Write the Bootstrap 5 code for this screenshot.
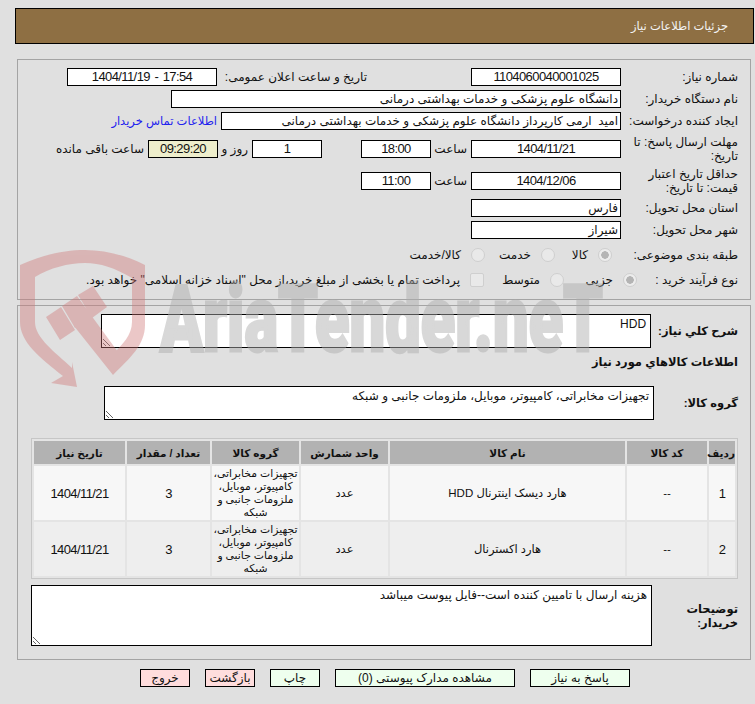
<!DOCTYPE html>
<html lang="fa" dir="rtl">
<head>
<meta charset="utf-8">
<title>جزئیات اطلاعات نیاز</title>
<link rel="stylesheet" href="https://cdn.jsdelivr.net/npm/bootstrap@5.3.0/dist/css/bootstrap.min.css">
<style>
html,body{height:100%}
body{background:#e0e0e0;color:#111;font-family:"Liberation Sans","DejaVu Sans","Noto Sans",sans-serif;font-size:12px;line-height:14px;position:relative;overflow:hidden}
.wm-layer{position:absolute;left:0;top:0;z-index:2;pointer-events:none;direction:ltr}
.wm-shield{fill:rgb(207,117,117);opacity:.4}
.wm-word{fill:#aeaeae;stroke:#aeaeae;stroke-width:3px;opacity:.48;font-family:Roboto,"Liberation Sans",sans-serif;font-weight:900;font-size:92px}
.pg{position:relative;z-index:1;padding-top:8px}
.top-bar{height:36px;margin:0 1px 0 15px;background:#8e6f43;border:1px solid #000;color:#f4f4f4;font-size:11.5px;padding-right:25px}
.pane{margin:0 4px 0 17px;border:1px solid #a4a4a4}
.pane-a{margin-top:15px;height:241px;padding:8px 12px 0 0}
.pane-b{margin-top:5px;height:355px;padding:8px 12px 0 0}
.frow{display:flex;align-items:center;height:18px;margin-bottom:4px;white-space:nowrap}
.frow.tall{height:30px;margin-bottom:2px}
.flab{flex:0 0 117px}
.tall .flab{white-space:normal;padding-left:8px}
.fv{height:18px;border:1px solid #000;background:#fff;line-height:16px;padding:0 2px;flex:none;overflow:hidden}
.ctr{text-align:center}
.num{font-size:13px;letter-spacing:-.6px;word-spacing:1.5px}
.w150{width:150px}.w450{width:450px}.w400{width:400px}.w70{width:70px}
.clock{background:#eeeecc}
.g-a{margin-right:4px}
.buyer-link{color:#2222ee;text-decoration:none;margin-right:4px;font-size:11.5px}
.opt{appearance:none;-webkit-appearance:none;width:14px;height:14px;border:1px solid #cfcfcf;border-radius:50%;background:#e9e9e9;margin:0;flex:none;opacity:1}
.opt.sq{border-radius:2px}
.opt.on{background:radial-gradient(circle,#b4b4b4 0 3.5px,#ececec 4px)}
.r8{height:18px;margin-top:7px;margin-bottom:7px}
.f126{flex-basis:126px}.f101{flex-basis:101px}
.lb-g{margin-right:10px}
.strong-lab{font-weight:700;font-size:11.5px;white-space:nowrap}
.ta{display:block;background:#fff;border:1px solid #000;border-radius:0;font:inherit;color:#111;padding:2px 4px;margin:0;outline:0;direction:rtl;flex:none}
.ta1{width:550px;height:34px;margin-right:7px}
.ta2{width:550px;height:34px;margin-right:20px}
.ta3{width:621px;height:61px;margin-right:20px}
.tb-wrap{margin:18px 0 0 13px}
.gridt{width:707px;border-collapse:separate;border-spacing:2px;background:#e4e4e4;border:1px solid #c6c6c6;table-layout:fixed;text-align:center}
.gridt th{background:#b2b2b2;height:23px;padding:0;font-weight:700;font-size:10.5px}
.gridt td{padding:0;height:54px;font-size:11.5px;line-height:13px}
.gridt td.num{font-size:13px}
.gridt td.grp{font-size:10.8px}
.gridt .o1 td{background:#f7f7f7}
.gridt .o2 td{background:#eeeeee}
.acts{display:flex;margin:9px 0 0 0;padding-right:125px;gap:15px}
.act{height:18px;border:1px solid #000;border-radius:0;font:inherit;line-height:16px;padding:0;color:#111;flex:none}
.act.ok{background:#eeffee}.act.no{background:#ffdddd}
.w100{width:100px}.w180{width:180px}.w50{width:50px}
</style>
</head>
<body>
<svg class="wm-layer" width="755" height="704" viewBox="0 0 755 704" aria-hidden="true">
  <g class="wm-shield">
    <path fill-rule="evenodd" d="M20 265C45 254 65 250 85 250C105 250 125 255 145 265L145 325C145 345 130 358 113 375L74 326L80 322L114 353C122 345 132 335 132 322L132 278C115 268 100 263 85 263C68 263 50 268 35 277L35 322C35 338 55 352 72 368L72 362L77 387L51 383L63 376C40 358 20 342 20 322Z"/>
    <path d="M46 317L61 307L75 330L60 340Z M62 306L77 296L118 352L113 358L80 324L75 328Z M78 295L93 286L107 307L92 318Z"/>
  </g>
  <text class="wm-word" x="160" y="351" textLength="443" lengthAdjust="spacingAndGlyphs">AriaTender.neT</text>
</svg>
<div class="pg">
  <div class="top-bar d-flex align-items-center">جزئیات اطلاعات نیاز</div>

  <div class="pane pane-a">
    <div class="frow">
      <div class="flab">شماره نیاز:</div>
      <div class="fv w150 ctr num">1104060040001025</div>
      <div style="flex:0 0 104px"></div>
      <div style="flex:0 0 150px">تاریخ و ساعت اعلان عمومی:</div>
      <div class="fv w150 ctr num" dir="ltr">1404/11/19 - 17:54</div>
    </div>
    <div class="frow">
      <div class="flab">نام دستگاه خریدار:</div>
      <div class="fv w450">دانشگاه علوم پزشکی و خدمات بهداشتی درمانی</div>
    </div>
    <div class="frow">
      <div class="flab">ایجاد کننده درخواست:</div>
      <div class="fv w400">امید&nbsp; ارمی کارپرداز دانشگاه علوم پزشکی و خدمات بهداشتی درمانی</div>
      <a class="buyer-link" href="#">اطلاعات تماس خریدار</a>
    </div>
    <div class="frow tall" style="margin-top:3px">
      <div class="flab">مهلت ارسال پاسخ: تا تاریخ:</div>
      <div class="fv w150 ctr num">1404/11/21</div>
      <div class="g-a" style="width:36px">ساعت</div>
      <div class="fv w70 ctr num">18:00</div>
      <div style="width:39px"></div>
      <div class="fv w70 ctr num">1</div>
      <div class="g-a" style="width:30px">روز و</div>
      <div class="fv w70 ctr clock num">09:29:20</div>
      <div class="g-a">ساعت باقی مانده</div>
    </div>
    <div class="frow tall">
      <div class="flab">حداقل تاریخ اعتبار قیمت: تا تاریخ:</div>
      <div class="fv w150 ctr num">1404/12/06</div>
      <div class="g-a" style="width:36px">ساعت</div>
      <div class="fv w70 ctr num">11:00</div>
    </div>
    <div class="frow" style="margin-top:3px">
      <div class="flab">استان محل تحویل:</div>
      <div class="fv w150">فارس</div>
    </div>
    <div class="frow">
      <div class="flab">شهر محل تحویل:</div>
      <div class="fv w150">شیراز</div>
    </div>
    <div class="frow r8">
      <div class="flab f126">طبقه بندی موضوعی:</div>
      <input class="opt on" type="radio" disabled aria-label="کالا">
      <span class="lb-g" style="width:33px">کالا</span>
      <input class="opt" type="radio" disabled aria-label="خدمت">
      <span class="lb-g" style="width:46px">خدمت</span>
      <input class="opt" type="radio" disabled aria-label="کالا/خدمت">
      <span class="lb-g">کالا/خدمت</span>
    </div>
    <div class="frow r8">
      <div class="flab f101">نوع فرآیند خرید :</div>
      <input class="opt on" type="radio" disabled aria-label="جزیی">
      <span class="lb-g" style="width:49px">جزیی</span>
      <input class="opt" type="radio" disabled aria-label="متوسط">
      <span class="lb-g" style="width:56px">متوسط</span>
      <input class="opt sq" type="checkbox" disabled aria-label="پرداخت">
      <span class="lb-g">پرداخت تمام یا بخشی از مبلغ خرید،از محل "اسناد خزانه اسلامی" خواهد بود.</span>
    </div>
  </div>

  <div class="pane pane-b">
    <div class="d-flex align-items-center">
      <div class="strong-lab" style="flex:0 0 79px">شرح کلي نياز:</div>
      <textarea class="ta ta1" aria-label="شرح">HDD</textarea>
    </div>
    <div class="strong-lab" style="margin-top:7px;height:31px">اطلاعات کالاهاي مورد نياز</div>
    <div class="d-flex align-items-center">
      <div class="strong-lab" style="flex:0 0 64px">گروه کالا:</div>
      <textarea class="ta ta2" aria-label="گروه">تجهیزات مخابراتی، کامپیوتر، موبایل، ملزومات جانبی و شبکه</textarea>
    </div>
    <div class="tb-wrap">
      <table class="gridt">
        <colgroup><col style="width:26px"><col style="width:80px"><col style="width:235px"><col style="width:87px"><col style="width:87px"><col style="width:83px"><col style="width:91px"></colgroup>
        <thead><tr><th>ردیف</th><th>کد کالا</th><th>نام کالا</th><th>واحد شمارش</th><th>گروه کالا</th><th>تعداد / مقدار</th><th>تاریخ نیاز</th></tr></thead>
        <tbody>
          <tr class="o1"><td class="num">1</td><td>--</td><td>هارد دیسک اینترنال HDD</td><td>عدد</td><td class="grp">تجهیزات مخابراتی، کامپیوتر، موبایل، ملزومات جانبی و شبکه</td><td class="num">3</td><td class="num">1404/11/21</td></tr>
          <tr class="o2"><td class="num">2</td><td>--</td><td>هارد اکسترنال</td><td>عدد</td><td class="grp">تجهیزات مخابراتی، کامپیوتر، موبایل، ملزومات جانبی و شبکه</td><td class="num">3</td><td class="num">1404/11/21</td></tr>
        </tbody>
      </table>
    </div>
    <div class="d-flex align-items-center" style="margin-top:6px">
      <div class="strong-lab" style="flex:0 0 66px">توضیحات<br>خریدار:</div>
      <textarea class="ta ta3" aria-label="توضیحات">هزینه ارسال با تامیین کننده است--فایل پیوست میباشد</textarea>
    </div>
  </div>

  <div class="acts">
    <button class="act ok w100" type="button">پاسخ به نیاز</button>
    <button class="act ok w180" type="button">مشاهده مدارک پیوستی (0)</button>
    <button class="act ok w50" type="button">چاپ</button>
    <button class="act no w50" type="button">بازگشت</button>
    <button class="act no w50" type="button">خروج</button>
  </div>
</div>
<script src="https://cdn.jsdelivr.net/npm/bootstrap@5.3.0/dist/js/bootstrap.bundle.min.js"></script>
</body>
</html>
